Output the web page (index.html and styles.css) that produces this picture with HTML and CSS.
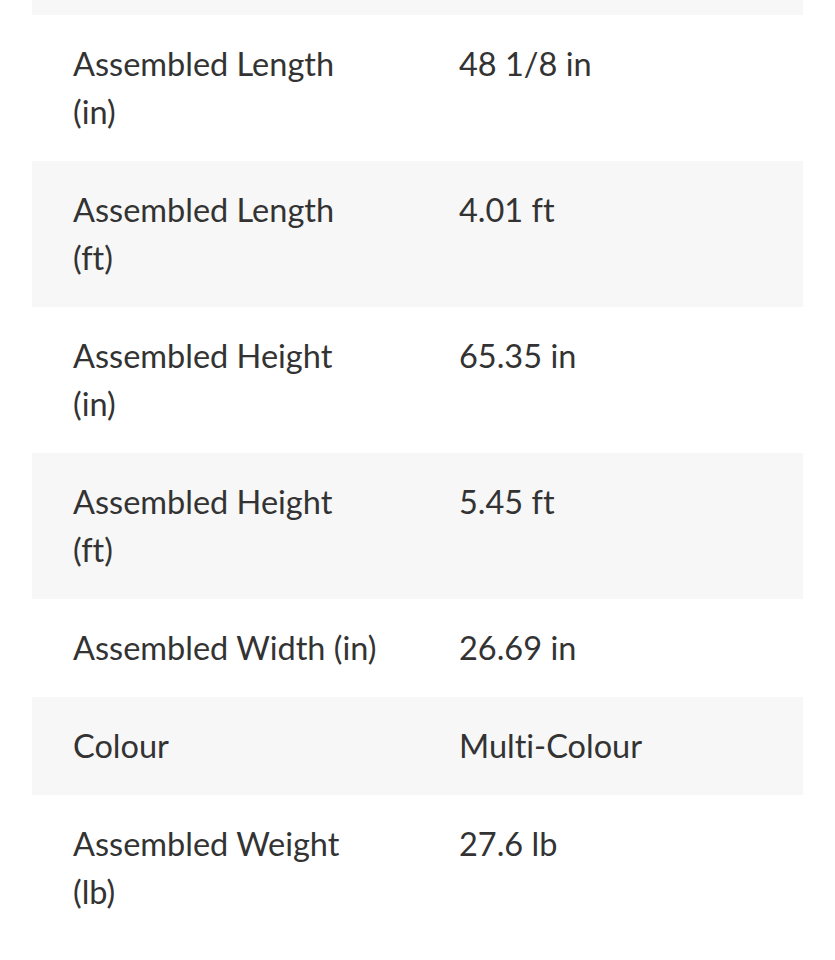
FILE: index.html
```html
<!DOCTYPE html>
<html>
<head>
<meta charset="utf-8">
<link rel="stylesheet" href="styles.css">
</head>
<body>
<div class="specs">
  <div class="row stub"></div>
  <div class="row"><div class="label">Assembled Length (in)</div><div class="value">48 1/8 in</div></div>
  <div class="row"><div class="label">Assembled Length (ft)</div><div class="value">4.01 ft</div></div>
  <div class="row"><div class="label">Assembled Height (in)</div><div class="value">65.35 in</div></div>
  <div class="row"><div class="label">Assembled Height (ft)</div><div class="value">5.45 ft</div></div>
  <div class="row"><div class="label">Assembled Width (in)</div><div class="value">26.69 in</div></div>
  <div class="row"><div class="label">Colour</div><div class="value">Multi-Colour</div></div>
  <div class="row"><div class="label">Assembled Weight (lb)</div><div class="value">27.6 lb</div></div>
</div>
</body>
</html>
```

FILE: styles.css
```css
html, body {
  margin: 0;
  padding: 0;
  background: #ffffff;
}
body {
  font-family: Lato, "Open Sans", sans-serif;
  color: #333333;
  font-variant-ligatures: none;
}
.specs {
  margin: 0 32px;
  display: flex;
  flex-direction: column;
}
.row {
  display: grid;
  grid-template-columns: 386px 1fr;
}
.row:nth-child(odd) {
  background: #f7f7f7;
}
.stub {
  height: 15px;
}
.label, .value {
  padding: 25px 41px;
  font-size: 32.5px;
  line-height: 48px;
}
.label {
  padding-right: 40px;
}
```
